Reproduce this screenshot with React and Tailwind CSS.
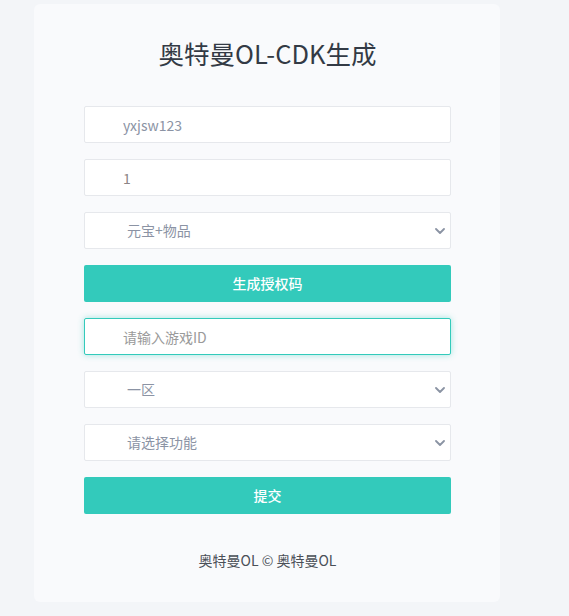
import { useState } from 'react';

const font = { fontFamily: '"Noto Sans CJK SC", "Noto Sans", sans-serif' };

function Chevron() {
  return (
    <svg
      viewBox="0 0 10 6"
      className="pointer-events-none absolute right-[6px] top-1/2 h-[6px] w-[10px] -translate-y-1/2"
    >
      <path d="M1 1l4 4 4-4" fill="none" stroke="#8a93a3" strokeWidth="1.8" strokeLinecap="round" strokeLinejoin="round" />
    </svg>
  );
}

function Select({ value, options, onChange }) {
  return (
    <div className="relative">
      <select
        value={value}
        onChange={(e) => onChange(e.target.value)}
        className="h-[37px] w-full appearance-none rounded-[2px] border border-[#e6e8ec] bg-white pl-[42px] pr-6 text-[14px] text-[#8b93a4] outline-none"
        style={font}
      >
        {options.map((o) => (
          <option key={o} value={o}>
            {o}
          </option>
        ))}
      </select>
      <Chevron />
    </div>
  );
}

export default function App() {
  const [user, setUser] = useState('yxjsw123');
  const [count, setCount] = useState('1');
  const [kind, setKind] = useState('元宝+物品');
  const [gameId, setGameId] = useState('');
  const [zone, setZone] = useState('一区');
  const [func, setFunc] = useState('请选择功能');

  return (
    <div className="min-h-[616px] bg-[#f3f5f8] pt-[4px]" style={font}>
      <div className="ml-[34px] w-[466px] rounded-[6px] bg-[#f9fafc] pb-[32px] pl-[50px] pr-[49px] pt-[32px]">
        {/* Title */}
        <h1 className="mb-[37px] h-[33px] text-center text-[25.5px] leading-[33px] text-[#333a45]">
          奥特曼OL-CDK生成
        </h1>

        {/* Form */}
        <div className="flex flex-col gap-[16px]">
          <input
            value={user}
            onChange={(e) => setUser(e.target.value)}
            className="h-[37px] w-full rounded-[2px] border border-[#e6e8ec] bg-white pl-[38px] text-[14px] text-[#8b93a4] outline-none"
          />
          <input
            value={count}
            onChange={(e) => setCount(e.target.value)}
            className="h-[37px] w-full rounded-[2px] border border-[#e6e8ec] bg-white pl-[38px] text-[14px] text-[#8c8486] outline-none"
          />
          <Select value={kind} onChange={setKind} options={['元宝+物品', '元宝', '物品']} />
          <button className="h-[37px] w-full rounded-[2px] bg-[#33cabb] text-[14px] font-medium text-white">
            生成授权码
          </button>
          <input
            value={gameId}
            onChange={(e) => setGameId(e.target.value)}
            placeholder="请输入游戏ID"
            className="h-[37px] w-full rounded-[2px] border border-[#33cabb] bg-white pl-[38px] text-[14px] text-[#8b93a4] shadow-[0_0_6px_rgba(51,202,187,0.45)] outline-none placeholder:text-[#9a9a9a]"
          />
          <Select value={zone} onChange={setZone} options={['一区', '二区', '三区']} />
          <Select value={func} onChange={setFunc} options={['请选择功能', '发送元宝', '发送物品']} />
          <button className="h-[37px] w-full rounded-[2px] bg-[#33cabb] text-[14px] font-medium text-white">
            提交
          </button>
        </div>

        {/* Footer */}
        <p className="mt-[36px] text-center text-[14px] leading-[20px] text-[#4a4f57]">
          奥特曼OL © 奥特曼OL
        </p>
      </div>
    </div>
  );
}
